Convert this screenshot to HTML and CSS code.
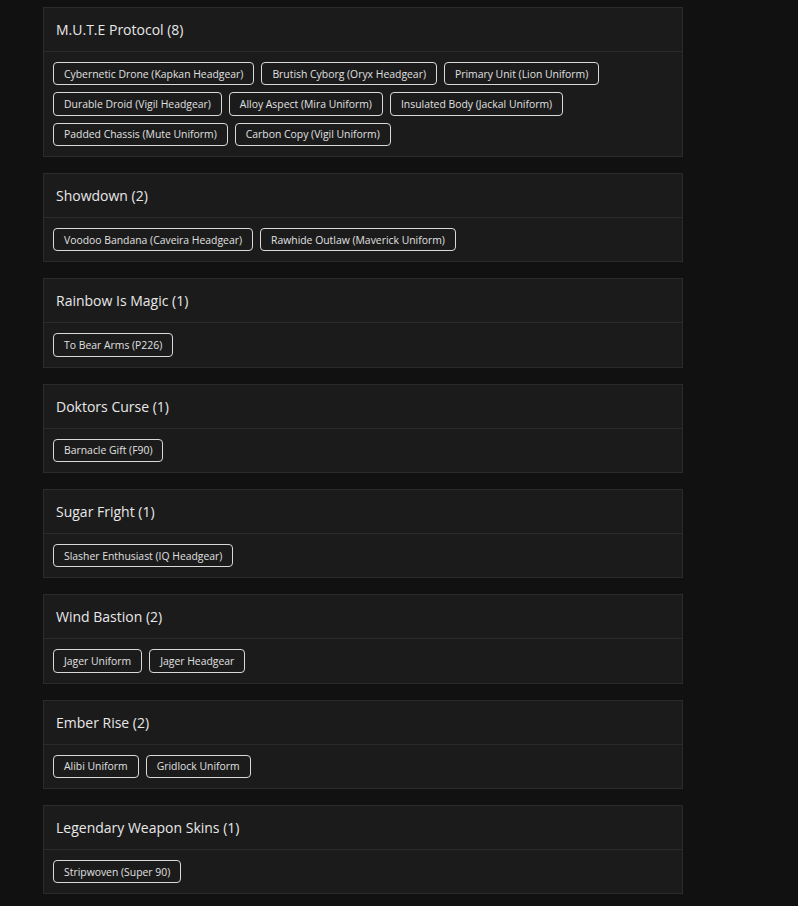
FILE: index.html
```html
<!DOCTYPE html>
<html lang="en">
<head>
  <meta charset="UTF-8" />
  <meta name="viewport" content="width=device-width, initial-scale=1" />
  <title>Event Collections</title>
  <link rel="stylesheet" href="styles.css">
</head>
<body>

  <div class="lista">

    <!-- M.U.T.E Protocol -->
    <div class="card">
      <div class="card-header">M.U.T.E Protocol (8)</div>
      <div class="card-body">
        <span class="tag">Cybernetic Drone (Kapkan Headgear)</span>
        <span class="tag">Brutish Cyborg (Oryx Headgear)</span>
        <span class="tag">Primary Unit (Lion Uniform)</span>
        <span class="tag">Durable Droid (Vigil Headgear)</span>
        <span class="tag">Alloy Aspect (Mira Uniform)</span>
        <span class="tag">Insulated Body (Jackal Uniform)</span>
        <span class="tag">Padded Chassis (Mute Uniform)</span>
        <span class="tag">Carbon Copy (Vigil Uniform)</span>
      </div>
    </div>

    <!-- Showdown -->
    <div class="card">
      <div class="card-header">Showdown (2)</div>
      <div class="card-body">
        <span class="tag">Voodoo Bandana (Caveira Headgear)</span>
        <span class="tag">Rawhide Outlaw (Maverick Uniform)</span>
      </div>
    </div>

    <!-- Rainbow Is Magic -->
    <div class="card">
      <div class="card-header">Rainbow Is Magic (1)</div>
      <div class="card-body">
        <span class="tag">To Bear Arms (P226)</span>
      </div>
    </div>

    <!-- Doktors Curse -->
    <div class="card">
      <div class="card-header">Doktors Curse (1)</div>
      <div class="card-body">
        <span class="tag">Barnacle Gift (F90)</span>
      </div>
    </div>

    <!-- Sugar Fright -->
    <div class="card">
      <div class="card-header">Sugar Fright (1)</div>
      <div class="card-body">
        <span class="tag">Slasher Enthusiast (IQ Headgear)</span>
      </div>
    </div>

    <!-- Wind Bastion -->
    <div class="card">
      <div class="card-header">Wind Bastion (2)</div>
      <div class="card-body">
        <span class="tag">Jager Uniform</span>
        <span class="tag">Jager Headgear</span>
      </div>
    </div>

    <!-- Ember Rise -->
    <div class="card">
      <div class="card-header">Ember Rise (2)</div>
      <div class="card-body">
        <span class="tag">Alibi Uniform</span>
        <span class="tag">Gridlock Uniform</span>
      </div>
    </div>

    <!-- Legendary Weapon Skins -->
    <div class="card">
      <div class="card-header">Legendary Weapon Skins (1)</div>
      <div class="card-body">
        <span class="tag">Stripwoven (Super 90)</span>
      </div>
    </div>

  </div>

</body>
</html>
```

FILE: styles.css
```css
body {
  margin: 0;
  background: #111111;
  color: #e6e6e6;
  font-family: "Open Sans", Arial, sans-serif;
}

.lista {
  width: 640px;
  margin-left: 43px;
  padding-top: 7px;
  display: flex;
  flex-direction: column;
  gap: 16px;
}

.card {
  background: #1b1b1b;
  border: 1px solid #2b2b2b;
}

.card-header {
  height: 43px;
  display: flex;
  align-items: center;
  padding: 0 12px;
  border-bottom: 1px solid #2b2b2b;
  font-size: 14px;
  font-weight: 500;
  color: #e8e8e8;
}

.card-body {
  display: flex;
  flex-wrap: wrap;
  gap: 7px;
  padding: 10px 9px;
}

.tag {
  height: 23.33px;
  box-sizing: border-box;
  display: flex;
  align-items: center;
  padding: 0 10px;
  border: 1px solid #d8d8d8;
  border-radius: 4px;
  font-size: 10.4px;
  color: #e0e0e0;
}
```
